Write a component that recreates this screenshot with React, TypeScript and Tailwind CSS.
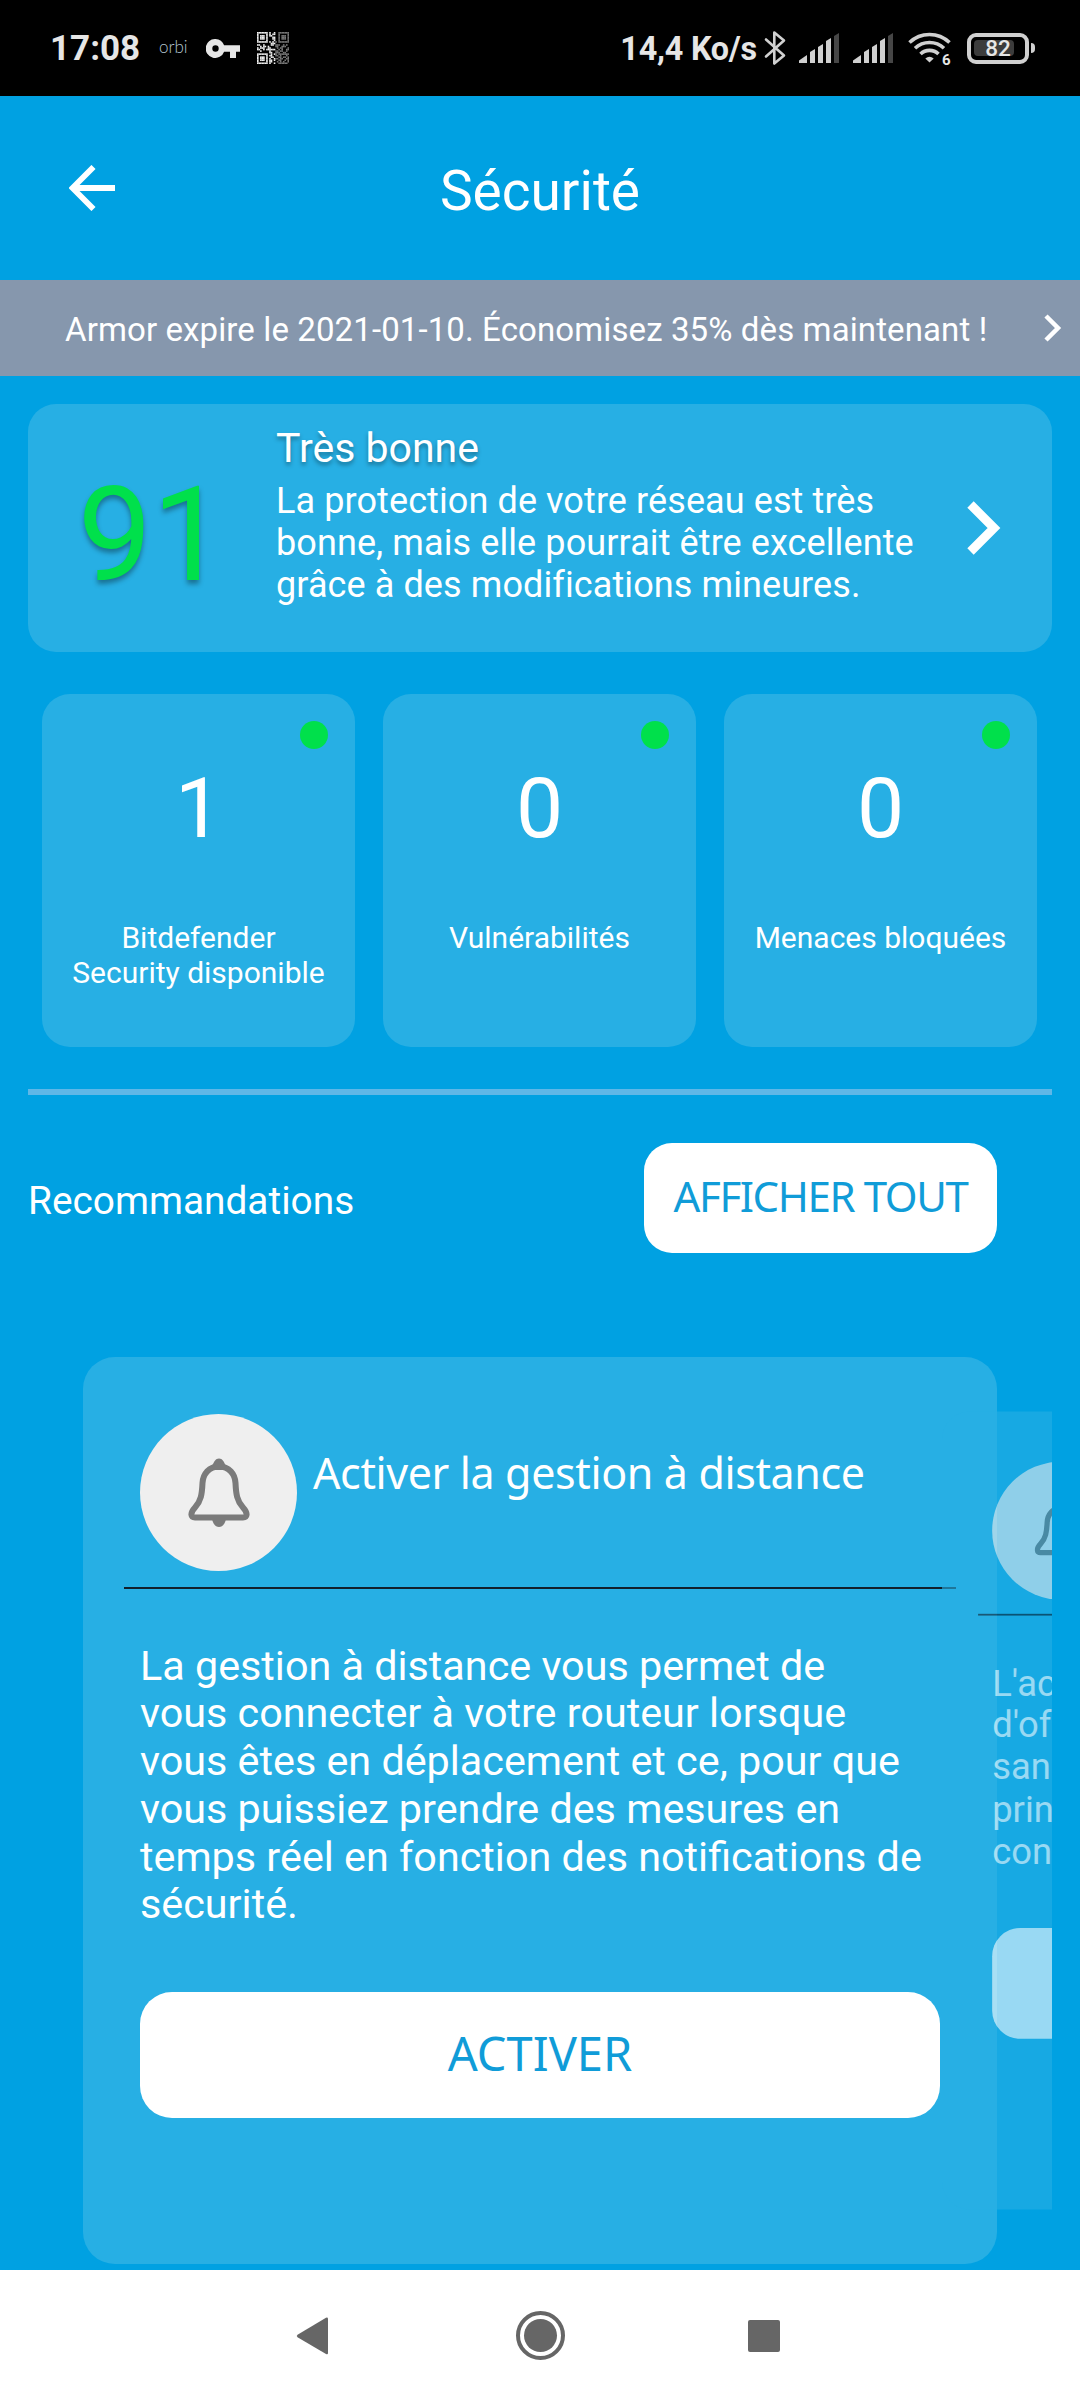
import { ReactNode } from "react";

interface Stat {
  value: number;
  label: string;
}

interface RecommendationProps {
  title?: string;
  lines: string[];
  action?: string;
  className?: string;
}

const stats: Stat[] = [
  { value: 1, label: "Bitdefender Security disponible" },
  { value: 0, label: "Vulnérabilités" },
  { value: 0, label: "Menaces bloquées" },
];

const qrRows = [
  "111111101001001111111",
  "100000101011001000001",
  "101110101100001011101",
  "101110100011001011101",
  "101110100011001011101",
  "100000100001001000001",
  "111111101010101111111",
  "000000000111000000000",
  "110010000110111001010",
  "001011010000110011100",
  "101110011000010110001",
  "110010111111001010011",
  "001000001000110110010",
  "000000001100111001100",
  "111111100101101111111",
  "100000101100110100010",
  "101110100110001101101",
  "101110101001110110011",
  "101110101101001100101",
  "100000101100010101001",
  "111111101001001111110",
];

const QrIcon = () => (
  <svg className="h-8 w-8" viewBox="0 0 21 21">
    {qrRows.map((row, y) =>
      row.split("").map((cell, x) =>
        cell === "1" ? (
          <rect key={`${x}-${y}`} x={x} y={y} width="1.050" height="1.050" fill={x > 11 ? "#777777" : "#f0f0f0"} />
        ) : null
      )
    )}
  </svg>
);

const KeyIcon = () => (
  <svg className="h-[19px] w-[34px]" viewBox="0 0 34 19" fill="#e6e6e6">
    <path
      fillRule="evenodd"
      d="M9.500 0a9.500 9.500 0 1 0 8.600 12.700H24V19h6v-6.300h4V6.300H18.100A9.500 9.500 0 0 0 9.500 0Zm0 6.300a3.200 3.200 0 1 1 0 6.400 3.200 3.200 0 0 1 0-6.400Z"
    />
  </svg>
);

const BluetoothIcon = () => (
  <svg className="h-[36px] w-[22px]" viewBox="0 0 22 36" fill="none" stroke="#d0d0d0" strokeWidth="2.600" strokeLinejoin="round" strokeLinecap="round">
    <path d="M2 9.500 20 25.500 10.300 33.500V2.500L20 10.500 2 26.500" />
  </svg>
);

const SignalIcon = () => (
  <svg className="h-[30px] w-[40px]" viewBox="0 0 40 30" fill="#d0d0d0">
    <path d="M0 30v-2.500L8 22v8Z" />
    <path d="M11 30V19l5-3v14Z" />
    <path d="M19 30V14l5-3v19Z" />
    <path d="M27 30V8l5-3v25Z" />
    <path d="M35 30V3l5-3v30Z" fill="#464646" />
  </svg>
);

const WifiIcon = () => (
  <svg className="h-[34px] w-[44px]" viewBox="0 0 44 34" fill="none" stroke="#d0d0d0" strokeWidth="3.600">
    <path d="M1.500 11.500A29 29 0 0 1 41.500 11.500" />
    <path d="M7 17.300A21 21 0 0 1 36 17.300" />
    <path d="M12.500 23A13 13 0 0 1 30.500 23" />
    <path d="M21.500 31.500 17.300 27.500Q21.500 24.200 25.700 27.500Z" fill="#d0d0d0" stroke="none" />
    <text x="34" y="33.500" fill="#e6e6e6" stroke="none" fontSize="15" fontWeight="700" fontFamily="Roboto">
      6
    </text>
  </svg>
);

const BellIcon = () => (
  <svg className="h-[70px] w-[62px]" viewBox="0 0 62 70" fill="none">
    <path
      d="M31 8.500C21 8.500 15 16 14.500 25C14 36 13 43 7 49.500C1.500 55.500 3 59.500 7 59.500H55C59 59.500 60.500 55.500 55 49.500C49 43 48 36 47.500 25C47 16 41 8.500 31 8.500Z"
      stroke="#7b7b7b"
      strokeWidth="6"
    />
    <path d="M24 8C26 4 27.500 0.500 31 0.500S36 4 38 8L36 12H26Z" fill="#7b7b7b" />
    <path d="M24 61H38C37 66 34.500 69 31 69S25 66 24 61Z" fill="#7b7b7b" />
  </svg>
);

const StatusBar = () => (
  <div className="flex h-24 items-center bg-black text-[#e6e6e6]">
    <span className="ml-[50px] w-[90px] pt-[2px] text-[35px] font-bold">17:08</span>
    <span className="ml-[19px] w-[28px] pb-[3px] font-['Lato'] text-[17px] font-light text-[#b4c6d0]">orbi</span>
    <div className="ml-[19px]">
      <KeyIcon />
    </div>
    <div className="ml-[17px]">
      <QrIcon />
    </div>
    <span className="ml-auto whitespace-nowrap pt-[2px] text-[32.300px] font-bold tracking-[-0.200px]">14,4 Ko/s</span>
    <div className="ml-[7px]">
      <BluetoothIcon />
    </div>
    <div className="ml-[13px]">
      <SignalIcon />
    </div>
    <div className="ml-[14px]">
      <SignalIcon />
    </div>
    <div className="ml-[15px]">
      <WifiIcon />
    </div>
    <div className="ml-[15px] flex h-[31px] w-[62px] items-center rounded-[9px] border-4 border-[#d0d0d0] px-[3px]">
      <div className="flex h-4 w-10 items-center justify-center rounded-sm bg-[#3c3c3c] pl-[8px] pt-[2px] text-[22.500px] font-medium">
        82
      </div>
    </div>
    <div className="ml-[2px] mr-[45px] h-[10px] w-1 rounded-r bg-[#d0d0d0]" />
  </div>
);

const Header = () => (
  <header className="grid h-[184px] grid-cols-[200px_1fr_200px] items-center">
    <svg className="ml-[69px] h-[46px] w-[46px]" viewBox="0 0 46 46" fill="none" stroke="white" strokeWidth="5.800">
      <path d="M24.500 2 3.500 23 24.500 44M4 23H46" />
    </svg>
    <h1 className="pt-[6px] text-center text-[55px]">Sécurité</h1>
  </header>
);

const Banner = () => (
  <div className="flex h-24 items-center justify-between bg-[#8697ad] pl-[65px] pr-[18px]">
    <span className="whitespace-nowrap pt-[3px] text-[33px] tracking-[0.110px]">
      Armor expire le 2021-01-10. Économisez 35% dès maintenant !
    </span>
    <svg className="h-[28px] w-[18px]" viewBox="0 0 18 28" fill="none" stroke="white" strokeWidth="4.500">
      <path d="M2 2 14 14 2 26" />
    </svg>
  </div>
);

const ScoreCard = () => (
  <section className="mx-7 mt-7 flex h-[248px] rounded-[28px] bg-[#27afe4]">
    <div className="flex w-[248px] items-center justify-center pt-[13px] text-[132px] leading-none text-[#00e04b] [text-shadow:0_4px_5px_rgba(0,0,0,0.35)]">
      91
    </div>
    <div className="w-[671px] pt-5">
      <h2 className="text-[41px] leading-[48px] [text-shadow:0_3px_4px_rgba(0,0,0,0.35)]">Très bonne</h2>
      <p className="mt-2 whitespace-nowrap text-[36px] leading-[42px] tracking-[0.100px]">
        La protection de votre réseau est très
        <br />
        bonne, mais elle pourrait être excellente
        <br />
        grâce à des modifications mineures.
      </p>
    </div>
    <svg className="ml-[20px] mt-[97px] h-[54px] w-[34px]" viewBox="0 0 34 54" fill="none" stroke="white" strokeWidth="9">
      <path d="M3.500 3.500 27 27 3.500 50.500" />
    </svg>
  </section>
);

const StatCard = ({ value, label }: Stat) => (
  <div className="relative h-[353px] rounded-[28px] bg-[#27afe4] px-6 pt-[73px] text-center">
    <span className="absolute right-[27px] top-[27px] h-7 w-7 rounded-full bg-[#00e04b]" />
    <div className="text-[84px] leading-[84px]">{value}</div>
    <div className="mt-[69px] text-[30px] leading-[35px]">{label}</div>
  </div>
);

const PillButton = ({ className, children }: { className: string; children?: ReactNode }) => (
  <button className={`flex items-center justify-center whitespace-nowrap bg-white font-['Noto_Sans'] text-[#109cd8] ${className}`}>
    {children}
  </button>
);

const Recommendation = ({ title, lines, action, className = "" }: RecommendationProps) => (
  <article className={`h-[907px] w-[914px] shrink-0 rounded-[32px] bg-[#27afe4] pt-[57px] ${className}`}>
    <div className="flex px-[57px]">
      <div className="flex h-[157px] w-[157px] items-center justify-center rounded-full bg-[#efefef]">
        <BellIcon />
      </div>
      <h3 className="ml-4 mt-[29px] whitespace-nowrap font-['Noto_Sans'] text-[43px] leading-[60px] tracking-[-0.370px]">{title}</h3>
    </div>
    <div className="ml-[41px] mt-[16px] h-[1.500px] w-[832px] bg-[#12202c]" />
    <p className="mt-[54px] whitespace-nowrap px-[57px] text-[41.300px] leading-[47.800px]">
      {lines.map((line) => (
        <span key={line} className="block">
          {line}
        </span>
      ))}
    </p>
    <PillButton className="mx-[57px] mt-[62.700px] h-[126px] w-[800px] rounded-[32px] pb-[3px] text-[47px]">{action}</PillButton>
  </article>
);

const NavBar = () => (
  <nav className="flex h-[130px] items-center bg-white pt-px text-[#666666]">
    <svg className="ml-[296px] h-[38px] w-[32px]" viewBox="0 0 32 38" fill="currentColor">
      <path d="M30 .7Q32 0 32 2V36Q32 38 30 37L1.500 20.300Q0 19 1.500 17.700Z" />
    </svg>
    <svg className="ml-[188px] h-[49px] w-[49px]" viewBox="0 0 49 49">
      <circle cx="24.500" cy="24.500" r="22.500" fill="none" stroke="currentColor" strokeWidth="4" />
      <circle cx="24.500" cy="24.500" r="16.500" fill="currentColor" />
    </svg>
    <div className="ml-[183px] h-8 w-8 rounded-[2px] bg-current" />
  </nav>
);

export default function App() {
  return (
    <div className="flex h-[2400px] w-[1080px] flex-col overflow-hidden bg-[#00a1e2] font-['Roboto',sans-serif] text-white">
      <StatusBar />
      <Header />
      <Banner />
      <ScoreCard />
      <section className="ml-[42px] mt-[42px] grid grid-cols-[repeat(3,313px)] gap-7">
        {stats.map((stat) => (
          <StatCard key={stat.label} {...stat} />
        ))}
      </section>
      <div className="mx-7 mt-[42px] h-[6px] shrink-0 bg-[#5fb7e7]" />
      <div className="ml-7 mr-[83px] mt-12 flex items-center justify-between">
        <h2 className="pt-[6px] text-[38.800px]">Recommandations</h2>
        <PillButton className="h-[110px] w-[353px] rounded-[28px] pb-[5px] text-[42px] tracking-[-1.400px]">
          AFFICHER TOUT
        </PillButton>
      </div>
      <section className="mx-7 mt-[104px] flex h-[913px] shrink-0 overflow-hidden pl-[55px]">
        <Recommendation
          title="Activer la gestion à distance"
          lines={[
            "La gestion à distance vous permet de",
            "vous connecter à votre routeur lorsque",
            "vous êtes en déplacement et ce, pour que",
            "vous puissiez prendre des mesures en",
            "temps réel en fonction des notifications de",
            "sécurité.",
          ]}
          action="ACTIVER"
        />
        <Recommendation
          className="-ml-[55px] origin-left scale-[0.88] opacity-60"
          lines={["L'act", "d'off", "san", "prin", "con"]}
        />
      </section>
      <NavBar />
    </div>
  );
}
